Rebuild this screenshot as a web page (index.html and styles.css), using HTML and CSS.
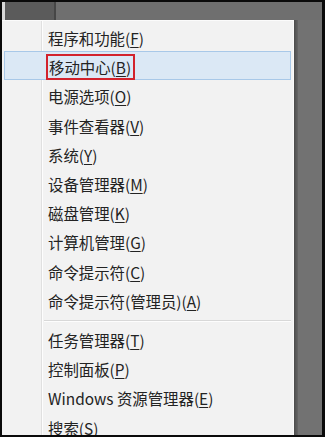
FILE: index.html
```html
<!DOCTYPE html>
<html lang="zh-CN">
<head>
<meta charset="utf-8">
<title>Win+X 菜单</title>
<link rel="stylesheet" href="styles.css">
</head>
<body>
<div class="frame">
  <div class="topbar">
    <div class="tb-light"></div>
    <div class="tb-dark"></div>
    <div class="tb-line"></div>
    <div class="tb-rest"></div>
  </div>
  <div class="main">
    <div class="menu">
      <div class="gutter"></div>
      <div class="item"><span class="label">程序和功能(<u>F</u>)</span></div>
      <div class="item active"><span class="label boxed">移动中心(<u>B</u>)</span></div>
      <div class="item"><span class="label">电源选项(<u>O</u>)</span></div>
      <div class="item"><span class="label">事件查看器(<u>V</u>)</span></div>
      <div class="item"><span class="label">系统(<u>Y</u>)</span></div>
      <div class="item"><span class="label">设备管理器(<u>M</u>)</span></div>
      <div class="item"><span class="label">磁盘管理(<u>K</u>)</span></div>
      <div class="item"><span class="label">计算机管理(<u>G</u>)</span></div>
      <div class="item"><span class="label">命令提示符(<u>C</u>)</span></div>
      <div class="item"><span class="label">命令提示符(管理员)(<u>A</u>)</span></div>
      <div class="sep"></div>
      <div class="item"><span class="label">任务管理器(<u>T</u>)</span></div>
      <div class="item"><span class="label">控制面板(<u>P</u>)</span></div>
      <div class="item"><span class="label">Windows 资源管理器(<u>E</u>)</span></div>
      <div class="item"><span class="label">搜索(<u>S</u>)</span></div>
    </div>
    <div class="shadow"></div>
    <div class="side"></div>
  </div>
</div>
</body>
</html>
```
FILE: styles.css
```css
html, body {
  margin: 0;
  padding: 0;
  background: #000;
}
.frame {
  box-sizing: border-box;
  width: 325px;
  height: 437px;
  border: 2px solid #0a0a0a;
  border-right-width: 3px;
  display: flex;
  flex-direction: column;
  overflow: hidden;
  background: #717171;
}
.topbar {
  height: 18px;
  display: flex;
  flex: none;
}
.tb-light { width: 3px; background: #d8d8d8; }
.tb-dark { width: 49px; background: #5b5b5b; }
.tb-line { width: 2px; background: #464646; }
.tb-rest { flex: 1; background: #6f6f6f; }
.main {
  flex: 1;
  display: flex;
  min-height: 0;
}
.menu {
  position: relative;
  width: 292px;
  flex: none;
  background: #f2f2f2;
  border-top: 1px solid #fbfbfb;
  border-right: 1px solid #fafafa;
  box-sizing: border-box;
  padding: 1px 2px 0 2px;
  display: flex;
  flex-direction: column;
}
.gutter {
  position: absolute;
  top: 0;
  bottom: 0;
  left: 39px;
  width: 1px;
  background: #e0e0e0;
  border-right: 1px solid #fdfdfd;
}
.item {
  position: relative;
  height: 29.2px;
  flex: none;
  box-sizing: border-box;
  display: flex;
  align-items: center;
  padding-left: 43px;
  padding-top: 3px;
  border: 1px solid transparent;
  font-family: "Noto Sans CJK SC", "Microsoft YaHei", sans-serif;
  font-size: 15.4px;
  color: #232323;
  line-height: 20px;
}
.item.active {
  background: #dbe8f5;
  border-color: #a8c8e8;
}
.label u {
  text-decoration-thickness: 1px;
  text-underline-offset: 2px;
}
.boxed {
  margin-left: -2px;
  padding: 1px 2px 1px 1px;
  border: 2px solid #d2222c;
}
.sep {
  height: 10px;
  flex: none;
  margin-left: 40px;
  display: flex;
  flex-direction: column;
  justify-content: flex-end;
  padding-bottom: 2px;
  box-sizing: border-box;
}
.sep::before {
  content: "";
  display: block;
  height: 1px;
  background: #d8d8d8;
  border-bottom: 1px solid #fdfdfd;
}
.shadow {
  width: 4px;
  flex: none;
  background: linear-gradient(to right, #4c4c4c, #666);
}
.side {
  flex: 1;
  background: #727272;
}
```
